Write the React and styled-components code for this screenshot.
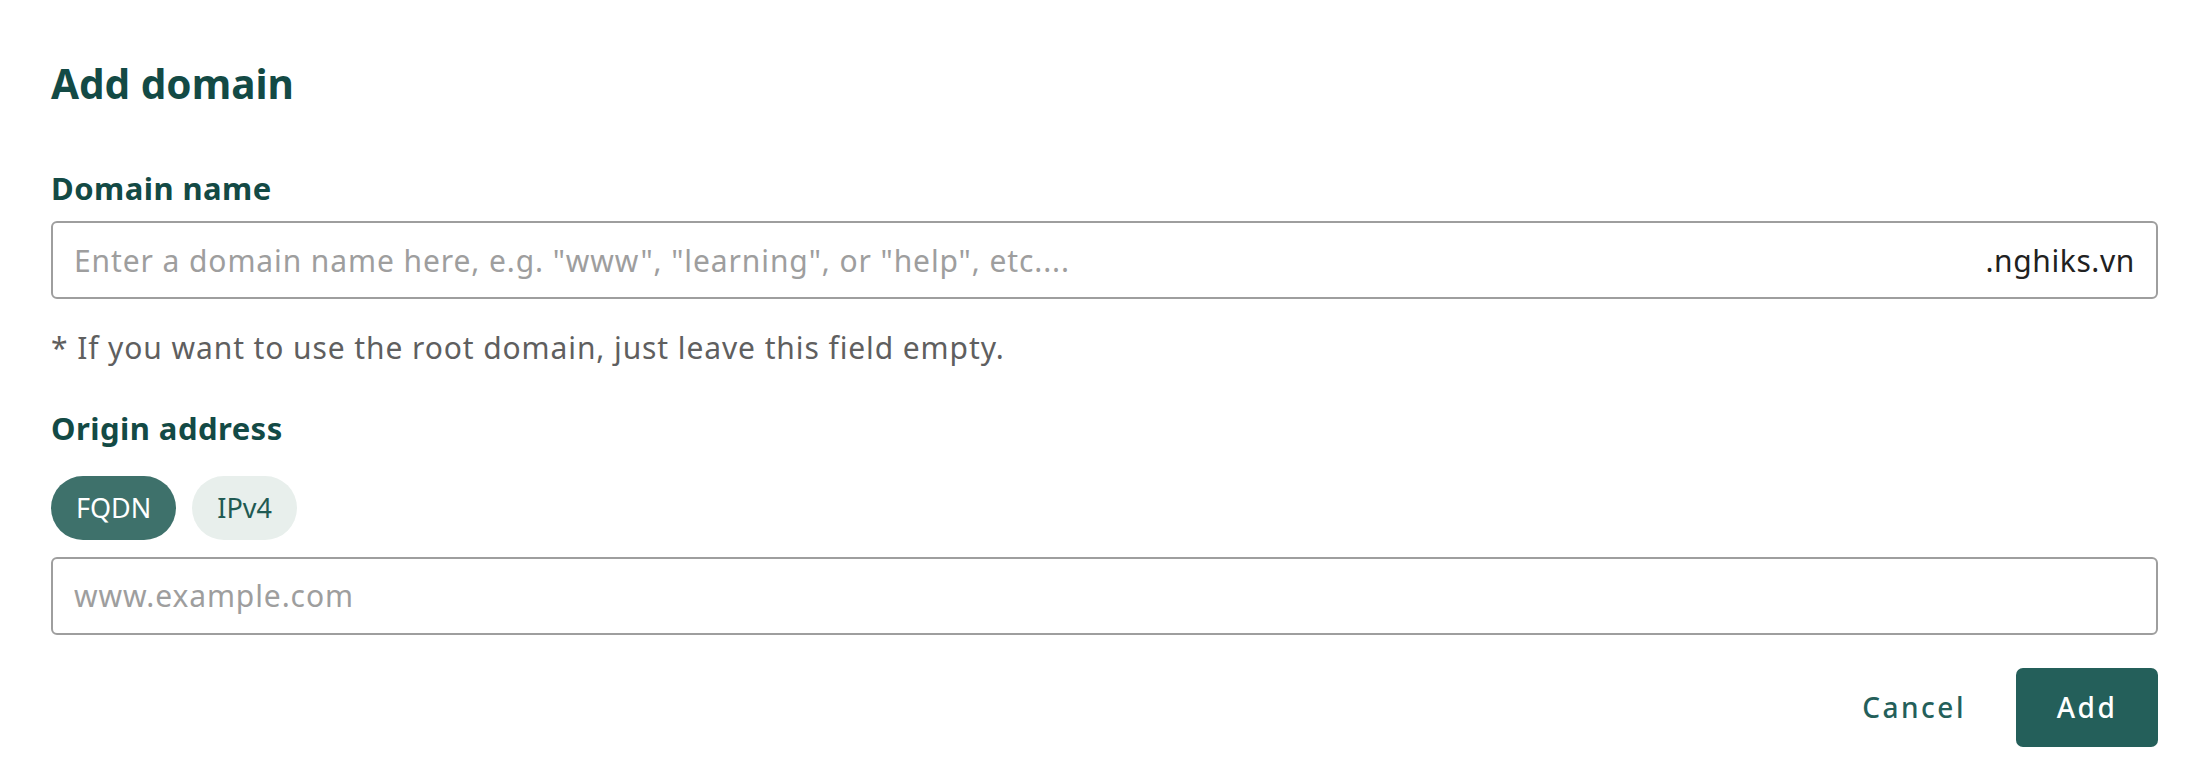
import React, { useState } from 'react';
import styled, { createGlobalStyle } from 'styled-components';

const GlobalStyle = createGlobalStyle`
  html, body {
    margin: 0;
    padding: 0;
    background: #ffffff;
  }
  body {
    font-family: "Noto Sans", "Open Sans", sans-serif;
  }
  * {
    box-sizing: border-box;
  }
`;

const AddDomainDialog = () => {
  const [subdomain, setSubdomain] = useState('');
  const [originType, setOriginType] = useState('fqdn');
  const [origin, setOrigin] = useState('');

  return (
    <Dialog>
      <Title>Add domain</Title>

      <Label htmlFor="subdomain">Domain name</Label>
      <InputBox>
        <Input
          id="subdomain"
          type="text"
          value={subdomain}
          onChange={(e) => setSubdomain(e.target.value)}
          placeholder={'Enter a domain name here, e.g. "www", "learning", or "help", etc....'}
        />
        <Suffix>.nghiks.vn</Suffix>
      </InputBox>
      <Hint>* If you want to use the root domain, just leave this field empty.</Hint>

      <Label htmlFor="origin" $top={35}>Origin address</Label>
      <ChipRow>
        <Chip type="button" $active={originType === 'fqdn'} onClick={() => setOriginType('fqdn')}>
          FQDN
        </Chip>
        <Chip type="button" $active={originType === 'ipv4'} onClick={() => setOriginType('ipv4')}>
          IPv4
        </Chip>
      </ChipRow>
      <InputBox>
        <Input
          id="origin"
          type="text"
          value={origin}
          onChange={(e) => setOrigin(e.target.value)}
          placeholder={originType === 'fqdn' ? 'www.example.com' : '192.168.0.1'}
        />
      </InputBox>

      <Actions>
        <TextButton type="button">Cancel</TextButton>
        <PrimaryButton type="button">Add</PrimaryButton>
      </Actions>
    </Dialog>
  );
};

const Dialog = styled.div`
  display: flex;
  flex-direction: column;
  padding: 60px 52px 24px 51px;
  background: #ffffff;
`;

const Title = styled.h2`
  margin: 0 0 56px;
  font-size: 40.5px;
  line-height: 1.2;
  font-weight: 700;
  color: #134a45;
`;

const Label = styled.label`
  display: block;
  margin: ${(p) => p.$top || 0}px 0 10px;
  font-size: 31px;
  line-height: 1.5;
  font-weight: 700;
  letter-spacing: 0.45px;
  color: #134a45;
`;

const InputBox = styled.div`
  display: flex;
  align-items: center;
  height: 78px;
  padding: 0 21px;
  border: 2px solid #9e9e9e;
  border-radius: 6px;
  background: #ffffff;
`;

const Input = styled.input`
  flex: 1;
  min-width: 0;
  border: none;
  outline: none;
  padding: 0;
  background: transparent;
  font-family: inherit;
  font-size: 30px;
  letter-spacing: 0.9px;
  color: #212121;

  &::placeholder {
    color: #9e9e9e;
  }
`;

const Suffix = styled.span`
  font-size: 30px;
  letter-spacing: 0.6px;
  color: #212121;
`;

const Hint = styled.p`
  margin: 26px 0 0;
  font-size: 30px;
  line-height: 1.5;
  letter-spacing: 0.9px;
  color: #5f5f5f;
`;

const ChipRow = styled.div`
  display: flex;
  gap: 16px;
  margin: 14px 0 17px;
`;

const Chip = styled.button`
  height: 64px;
  padding: 0 25px;
  border: none;
  border-radius: 32px;
  font-family: inherit;
  font-size: 27px;
  cursor: pointer;
  background: ${(p) => (p.$active ? '#3e716b' : '#e8efec')};
  color: ${(p) => (p.$active ? '#ffffff' : '#1f5a53')};
`;

const Actions = styled.div`
  display: flex;
  justify-content: flex-end;
  align-items: center;
  gap: 34px;
  margin-top: 33px;
`;

const TextButton = styled.button`
  height: 79px;
  padding: 0 16px;
  border: none;
  background: transparent;
  font-family: inherit;
  font-size: 28px;
  font-weight: 500;
  letter-spacing: 2.5px;
  color: #245f5a;
  cursor: pointer;
`;

const PrimaryButton = styled.button`
  width: 142px;
  height: 79px;
  border: none;
  border-radius: 7px;
  background: #245f5a;
  font-family: inherit;
  font-size: 28px;
  font-weight: 500;
  letter-spacing: 2.5px;
  color: #ffffff;
  cursor: pointer;
`;

const App = () => (
  <>
    <GlobalStyle />
    <AddDomainDialog />
  </>
);

export default App;
